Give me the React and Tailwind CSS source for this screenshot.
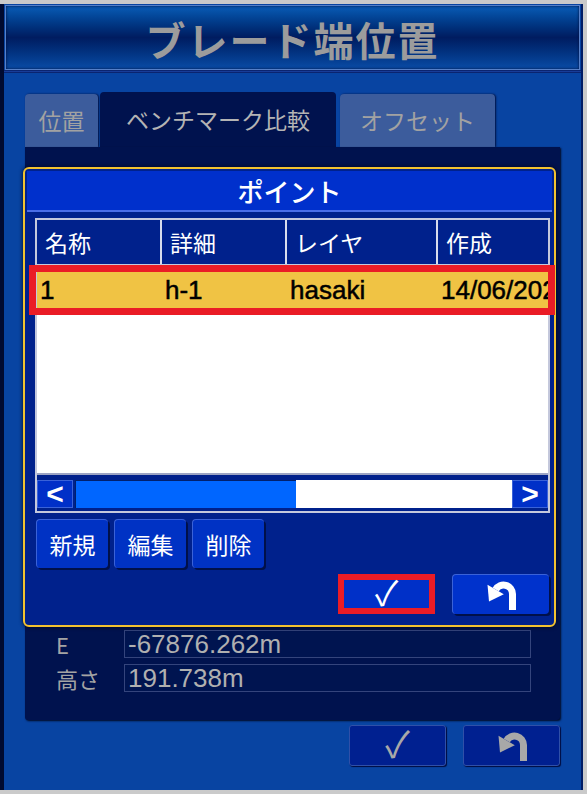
import React from 'react';

const jp = { fontFamily: '"Noto Sans CJK JP", "Noto Sans", sans-serif' };
const lat = { fontFamily: '"Liberation Sans", Arial, "Noto Sans CJK JP", sans-serif' };

const UndoIcon = ({ color = '#ffffff' }) => (
  <svg width="36" height="32" viewBox="0 0 36 32">
    <path d="M29.5 31 V15 A9 9 0 0 0 12.7 10.5" fill="none" stroke={color} strokeWidth="7" />
    <polygon points="4.5,5.8 20.8,15.2 6,22.5" fill={color} />
  </svg>
);

const columns = [
  { label: '名称', w: 'w-[125px]' },
  { label: '詳細', w: 'w-[125px]' },
  { label: 'レイヤ', w: 'w-[151px]' },
  { label: '作成', w: 'flex-1' },
];

const row = ['1', 'h-1', 'hasaki', '14/06/2024'];

const SmallButton = ({ children }) => (
  <div
    className="w-[72px] h-[49px] rounded-[4px] bg-[#0032c4] border-t border-l border-[#3a62d8] shadow-[2px_2px_0_#00104a] flex items-center justify-center text-white text-[23px]"
    style={jp}
  >
    {children}
  </div>
);

const Dialog = () => (
  <div className="absolute left-[-2px] top-[20px] w-[533px] h-[460px] rounded-[6px] border-2 border-[#f2c230] bg-[#00218c] shadow-[0_0_4px_#000820] p-[2px] flex flex-col">
    <div className="h-[41px] bg-[#0030cc] border-b-2 border-[#4a6ee8] flex items-center justify-center text-white text-[26px] font-medium" style={jp}>
      ポイント
    </div>

    <div className="ml-[8px] mr-[2px] mt-[6px] h-[295px] border-2 border-[#c4c8dc] flex flex-col">
      <div className="h-[45px] flex bg-[#00218c] border-b border-[#c4c8dc]">
        {columns.map((c, i) => (
          <div
            key={c.label}
            className={`${c.w} ${i < 3 ? 'border-r-2 border-[#d8dcec]' : ''} flex items-center pl-[8px] text-white text-[23px]`}
            style={jp}
          >
            {c.label}
          </div>
        ))}
      </div>
      <div className="relative h-[50px] bg-[#f0c344] flex">
        {row.map((t, i) => (
          <div
            key={t}
            className={`${columns[i].w} overflow-hidden whitespace-nowrap flex items-center pl-[3px] text-black text-[26px] [-webkit-text-stroke:0.5px_black]`}
            style={lat}
          >
            {t}
          </div>
        ))}
        <div className="absolute left-[-8px] right-[-7px] top-0 bottom-0 border-[7px] border-[#ea1c26]" />
      </div>
      <div className="h-[160px] bg-white border-b-2 border-[#9ca4c4]" />
      <div className="flex-1 flex items-center pt-[4px] pb-[2px]">
        <div className="w-[36px] h-[28px] bg-[#0030c8] border border-[#3a62d8] flex items-center justify-center text-white text-[30px] font-bold leading-none" style={lat}>
          &lt;
        </div>
        <div className="w-[221px] h-[28px] ml-[2px] bg-[#0066ff] border-t border-l border-[#00206c]" />
        <div className="flex-1 h-[28px] bg-white" />
        <div className="w-[36px] h-[28px] bg-[#0030c8] border border-[#3a62d8] flex items-center justify-center text-white text-[30px] font-bold leading-none" style={lat}>
          &gt;
        </div>
      </div>
    </div>

    <div className="ml-[9px] mt-[6px] flex gap-[6px]">
      <SmallButton>新規</SmallButton>
      <SmallButton>編集</SmallButton>
      <SmallButton>削除</SmallButton>
    </div>

    <div className="mt-[6px] mr-[3px] flex justify-end gap-[17px]">
      <div className="w-[97px] h-[40px] border-[6px] border-[#ea1c26] bg-[#0030c8] flex items-center justify-center text-white text-[34px]" style={lat}>
        ✓
      </div>
      <div className="w-[97px] h-[40px] rounded-[4px] bg-[#0032cc] border-t border-l border-[#3a62d8] shadow-[2px_2px_0_#00104a] flex items-center justify-center">
        <UndoIcon />
      </div>
    </div>
  </div>
);

const Field = ({ label, value }) => (
  <div className="flex items-center h-[29px]">
    <div className="w-[68px] text-[#a4a4a4] text-[22px] leading-none" style={jp}>
      {label}
    </div>
    <div className="w-[407px] h-[28px] border border-[#34447c] bg-[#001450] flex items-center pl-[3px] text-[#b0b0b0] text-[26px] leading-none" style={lat}>
      {value}
    </div>
  </div>
);

export default function App() {
  return (
    <div className="w-[587px] h-[794px] bg-[#cacaca] pt-[4px] pr-[4px] pb-[4px]">
      <div className="h-full flex flex-col bg-[#0844a2] border-l-[4px] border-l-[#000a30] border-r-[2px] border-r-[#001c66]">
        {/* title bar */}
        <div className="mx-[1px] mt-[1px] h-[65px] border border-[#5680c8] bg-gradient-to-b from-[#0a5cb6] via-[#001c60] to-[#0a4ca6] shadow-[inset_0_0_3px_#001040] flex items-center justify-center">
          <span className="text-[#9c9c9c] text-[40px] font-bold tracking-[2px] pt-[2px]" style={jp}>
            ブレード端位置
          </span>
        </div>
        <div className="h-[3px] bg-[#183c98] border-y border-[#0a2470]" />

        {/* body */}
        <div className="flex-1 flex flex-col px-[21px] pt-[19px]">
          <div className="flex items-end h-[55px]">
            <div className="w-[73px] h-[53px] rounded-t-[4px] bg-[#3c5c9c] shadow-[1px_0_2px_#001040] flex items-center justify-center text-[#a2a2a2] text-[23px]" style={jp}>
              位置
            </div>
            <div className="ml-[2px] w-[236px] h-[55px] rounded-t-[4px] bg-[#00124e] flex items-center justify-center text-[#b4b4b4] text-[23px]" style={jp}>
              ベンチマーク比較
            </div>
            <div className="ml-[4px] w-[155px] h-[53px] rounded-t-[4px] bg-[#3c5c9c] shadow-[1px_0_2px_#001040] flex items-center justify-center text-[#a2a2a2] text-[23px]" style={jp}>
              オフセット
            </div>
          </div>

          <div className="relative h-[573px] bg-[#00124e] rounded-b-[3px] shadow-[1px_1px_2px_#000820] flex flex-col justify-end gap-[5px] pl-[31px] pb-[28px]">
            <Field label="E" value="-67876.262m" />
            <Field label="高さ" value="191.738m" />
            <Dialog />
          </div>

          <div className="mt-[5px] flex justify-end gap-[17px]">
            <div className="w-[97px] h-[41px] rounded-[3px] bg-[#002090] border border-[#3050a8] shadow-[1px_1px_1px_#000c40] flex items-center justify-center text-[#a8a8a8] text-[36px]" style={lat}>
              ✓
            </div>
            <div className="w-[97px] h-[41px] rounded-[3px] bg-[#002090] border border-[#3050a8] shadow-[1px_1px_1px_#000c40] flex items-center justify-center">
              <UndoIcon color="#a8a8a8" />
            </div>
          </div>
        </div>
      </div>
    </div>
  );
}
